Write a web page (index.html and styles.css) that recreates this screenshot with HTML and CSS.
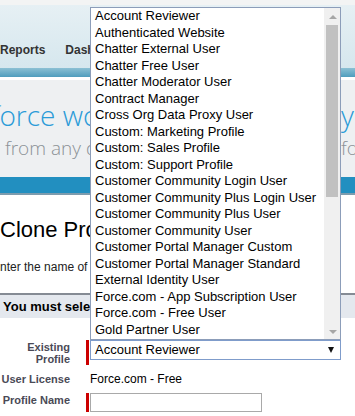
FILE: index.html
```html
<!DOCTYPE html>
<html>
  <head>
    <title>Clone Profile</title>
    <link rel="stylesheet" href="styles.css">
  </head>
  <body>
    <div class="topline"></div>
    <div class="header">
      <nav class="tabs">
        <span class="tab">Reports</span>
        <span class="tab">Dashboards</span>
      </nav>
    </div>
    <div class="tabbar"></div>

    <div class="banner">
      <div class="banner-line big">
        <span class="lead">force works wherever you</span>
        <span class="tail">you</span>
      </div>
      <div class="banner-line small">
        <span class="lead">from any device, anywhere</span>
        <span class="tail">for</span>
      </div>
    </div>
    <div class="bluebar"></div>

    <div class="intro">
      <h1>Clone Profile</h1>
      <p>Enter the name of the new profile.</p>
    </div>

    <div class="section-head">You must select an existing profile to clone.</div>

    <div class="form">
      <div class="label">Existing Profile</div>
      <div class="field required">
        <div class="select-wrap">
          <div class="options">
            <div class="option">Account Reviewer</div>
            <div class="option">Authenticated Website</div>
            <div class="option">Chatter External User</div>
            <div class="option">Chatter Free User</div>
            <div class="option">Chatter Moderator User</div>
            <div class="option">Contract Manager</div>
            <div class="option">Cross Org Data Proxy User</div>
            <div class="option">Custom: Marketing Profile</div>
            <div class="option">Custom: Sales Profile</div>
            <div class="option">Custom: Support Profile</div>
            <div class="option">Customer Community Login User</div>
            <div class="option">Customer Community Plus Login User</div>
            <div class="option">Customer Community Plus User</div>
            <div class="option">Customer Community User</div>
            <div class="option">Customer Portal Manager Custom</div>
            <div class="option">Customer Portal Manager Standard</div>
            <div class="option">External Identity User</div>
            <div class="option">Force.com - App Subscription User</div>
            <div class="option">Force.com - Free User</div>
            <div class="option">Gold Partner User</div>
            <div class="scrollbar">
              <div class="arrow-up"></div>
              <div class="thumb"></div>
              <div class="arrow-down"></div>
            </div>
          </div>
          <div class="select">
            <span>Account Reviewer</span>
            <span class="caret"></span>
          </div>
        </div>
      </div>

      <div class="label">User License</div>
      <div class="field value">Force.com - Free</div>

      <div class="label">Profile Name</div>
      <div class="field required">
        <input class="text-input" type="text">
      </div>
    </div>
  </body>
</html>
```

FILE: styles.css
```css
body {
  margin: 0;
  font-family: "Liberation Sans", Arial, sans-serif;
  background: #fff;
  overflow: hidden;
}

.topline {
  height: 5px;
  background: #f3f4f4;
}

.header {
  height: 63px;
  box-sizing: border-box;
  padding-top: 38px;
  background: linear-gradient(#e6f0f4, #d6e7ee);
}

.tabs {
  display: flex;
  gap: 20px;
}

.tab {
  font-size: 12px;
  font-weight: bold;
  line-height: 15px;
  color: #333;
  white-space: nowrap;
}

.tabbar {
  height: 9px;
  background: linear-gradient(#8cc0d4, #4f9dbd);
  margin-bottom: 3px;
}

.banner {
  height: 97px;
  box-sizing: border-box;
  padding-top: 18px;
  background: #eef0f2;
  font-family: "Open Sans", sans-serif;
  font-weight: 300;
  overflow: hidden;
}

.banner-line {
  display: flex;
  white-space: nowrap;
}

.banner-line .lead {
  width: 341px;
  flex: none;
  overflow: hidden;
  text-indent: -9px;
}

.big {
  font-size: 28px;
  line-height: 34px;
  color: #2a9bd8;
}

.small {
  margin-top: 4px;
  font-size: 19px;
  line-height: 24px;
  color: #8b9096;
}

.small .lead {
  text-indent: 5px;
}

.bluebar {
  height: 16px;
  background: #228fc0;
  border-bottom: 2px solid #7d9cae;
}

.intro {
  padding: 22px 0 18px;
}

.intro h1 {
  margin: 0 0 17px;
  font-size: 22px;
  line-height: 26px;
  font-weight: normal;
  color: #000;
}

.intro p {
  margin: 0 0 0 -8px;
  font-size: 12px;
  line-height: 15px;
  color: #222;
  white-space: nowrap;
}

.section-head {
  height: 23px;
  border-top: 2px solid #858b94;
  background: #e4e8ee;
  padding-left: 3px;
  font-size: 13px;
  font-weight: bold;
  line-height: 23px;
  color: #000;
  white-space: nowrap;
}

.form {
  display: grid;
  grid-template-columns: 70px 1fr;
  column-gap: 16px;
  row-gap: 7px;
  padding-top: 22px;
}

.label {
  padding-top: 1px;
  text-align: right;
  font-size: 11px;
  font-weight: bold;
  line-height: 12px;
  color: #4a4a56;
}

.field {
  font-size: 12px;
  line-height: 14px;
}

.required {
  border-left: 3px solid #c00;
  padding-left: 1px;
  justify-self: start;
}

.value {
  padding-left: 4px;
  color: #000;
}

.select-wrap {
  position: relative;
  width: 251px;
}

.select {
  display: flex;
  align-items: center;
  justify-content: space-between;
  height: 20px;
  box-sizing: border-box;
  padding: 0 6px 0 4px;
  border: 1px solid #7f9ccb;
  background: #fff;
  font-size: 13px;
  color: #000;
}

.caret {
  width: 0;
  height: 0;
  border-left: 3px solid transparent;
  border-right: 3px solid transparent;
  border-top: 6px solid #111;
}

.options {
  position: absolute;
  left: 0;
  bottom: 100%;
  width: 100%;
  box-sizing: border-box;
  padding-bottom: 1px;
  border: 1px solid #8c9db9;
  background: #fff;
}

.option {
  padding-left: 4px;
  font-size: 13px;
  line-height: 16.5px;
  color: #000;
  white-space: nowrap;
}

.scrollbar {
  position: absolute;
  top: 0;
  right: 0;
  bottom: 0;
  width: 16px;
  background: #f0f0f0;
}

.arrow-up,
.arrow-down {
  position: absolute;
  left: 5px;
  width: 0;
  height: 0;
  border-left: 4px solid transparent;
  border-right: 4px solid transparent;
}

.arrow-up {
  top: 7px;
  border-bottom: 4px solid #a6a6a6;
}

.arrow-down {
  bottom: 5px;
  border-top: 4px solid #a6a6a6;
}

.thumb {
  position: absolute;
  top: 17px;
  left: 2px;
  width: 12px;
  height: 172px;
  background: #c1c1c1;
}

.text-input {
  display: block;
  width: 172px;
  height: 19px;
  box-sizing: border-box;
  margin: 0;
  border: 1px solid #a9a9a9;
  padding: 0 3px;
  font-family: inherit;
  font-size: 12px;
}
```
